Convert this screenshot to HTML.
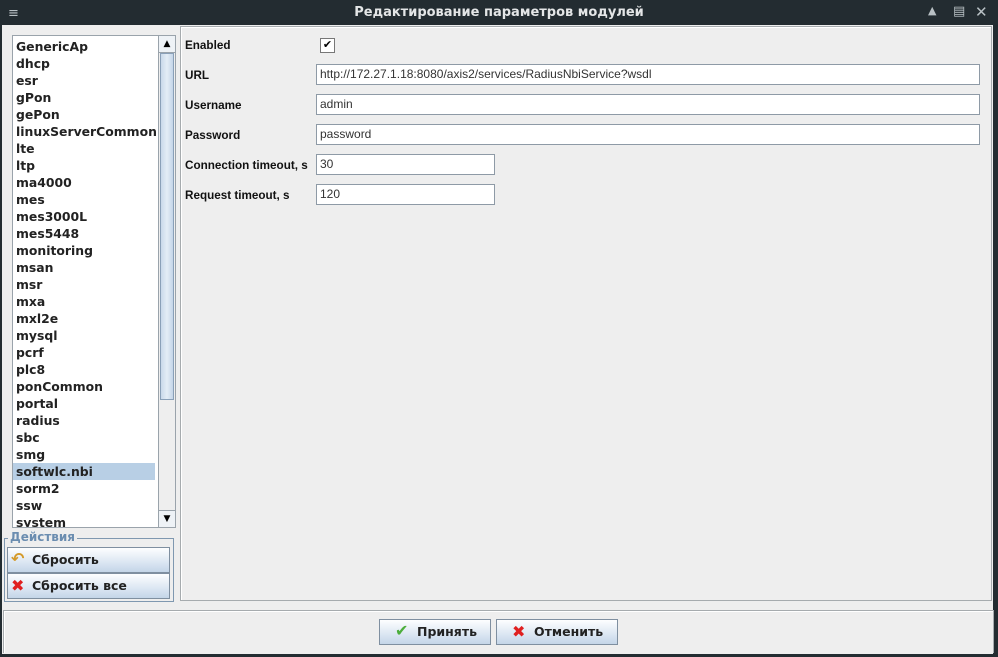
<!DOCTYPE html><html><head><style>
body{margin:0;width:998px;height:657px;background:#232c31;position:relative;overflow:hidden;font-family:"DejaVu Sans",sans-serif}
.a{position:absolute}
.title{left:0;top:0;width:998px;height:25px;color:#e4e6e7;font:bold 13px "DejaVu Sans",sans-serif;text-align:center;line-height:25px}
.win{left:2px;top:25px;width:991px;height:629px;background:#eeeeee}
.list{left:12px;top:35px;width:162px;height:492px;background:#fff;border:1px solid #9aa3ab;overflow:hidden;padding-top:2px;box-sizing:border-box;height:493px;width:164px}
.list div{height:17px;line-height:17px;padding-left:3px;font-size:12.4px;font-weight:bold;color:#222;white-space:nowrap}
.sel{background:#b8cfe5;width:139px}
.sb{left:158px;top:36px;width:16px;height:491px;background:#eee;border-left:1px solid #9aa3ab}
.lbl{left:185px;font:bold 11.7px "Liberation Sans",sans-serif;color:#111}
.tf{left:316px;background:#fff;border:1px solid #8e9aa6;font:12px "Liberation Sans",sans-serif;line-height:19px;padding-left:3px;color:#333;box-sizing:border-box;height:21px}
.btn{border:1px solid #7f8fa0;background:linear-gradient(#fdfeff,#dbe6f2 60%,#c4d5e8);font-size:12.5px;font-weight:bold;color:#222;box-sizing:border-box}
</style></head><body>
<div class="a title">Редактирование параметров модулей</div>
<div class="a" style="left:8px;top:6px;color:#b8c0c4;font-size:13px">≡</div>
<div class="a" style="left:928px;top:4px;color:#b8c0c4;font-size:11px">▲</div>
<div class="a" style="left:953px;top:4px;color:#b8c0c4;font-size:13px">▤</div>
<div class="a" style="left:975px;top:3px;color:#b8c0c4;font-size:15px;font-weight:bold">✕</div>
<div class="a win"></div>
<div class="a" style="left:180px;top:26px;width:812px;height:575px;box-sizing:border-box;border:1px solid #a6abae;box-shadow:inset 1px 1px 0 #fff"></div>
<div class="a list">
<div>GenericAp</div><div>dhcp</div><div>esr</div><div>gPon</div><div>gePon</div><div>linuxServerCommon</div><div>lte</div><div>ltp</div><div>ma4000</div><div>mes</div><div>mes3000L</div><div>mes5448</div><div>monitoring</div><div>msan</div><div>msr</div><div>mxa</div><div>mxl2e</div><div>mysql</div><div>pcrf</div><div>plc8</div><div>ponCommon</div><div>portal</div><div>radius</div><div>sbc</div><div>smg</div><div class="sel">softwlc.nbi</div><div>sorm2</div><div>ssw</div><div>system</div>
</div>
<div class="a sb"><div class="a" style="left:0;top:0;width:16px;height:16px;background:#eef2f6;border-bottom:1px solid #9aa3ab;font-size:9px;text-align:center;line-height:16px">▲</div><div class="a" style="left:1px;top:17px;width:14px;height:347px;background:linear-gradient(90deg,#c9d9ea,#e4edf6,#c4d5e8);border:1px solid #8aa0b8;box-sizing:border-box"></div><div class="a" style="left:0;bottom:0;width:16px;height:16px;background:#eef2f6;border-top:1px solid #9aa3ab;font-size:9px;text-align:center;line-height:16px">▼</div></div>
<div class="a" style="left:4px;top:538px;width:168px;height:62px;border:1px solid #7f98b0"></div>
<div class="a" style="left:8px;top:530px;background:#eee;color:#6b8db0;font-size:12px;font-weight:bold;padding:0 2px">Действия</div>
<div class="a btn" style="left:7px;top:547px;width:163px;height:26px;line-height:24px;padding-left:24px">Сбросить</div>
<div class="a" style="left:11px;top:549px;color:#d49a2a;font-size:16px;font-weight:bold">↶</div>
<div class="a btn" style="left:7px;top:573px;width:163px;height:26px;line-height:24px;padding-left:24px">Сбросить все</div>
<div class="a" style="left:11px;top:576px;color:#e02020;font-size:16px;font-weight:bold">✖</div>
<div class="a lbl" style="top:39px">Enabled</div>
<div class="a" style="left:320px;top:38px;width:13px;height:13px;border:1px solid #777;background:#fff;font-size:11px;line-height:12px;text-align:center">✔</div>
<div class="a lbl" style="top:69px">URL</div><div class="a tf" style="top:64px;width:664px">http://172.27.1.18:8080/axis2/services/RadiusNbiService?wsdl</div>
<div class="a lbl" style="top:99px">Username</div><div class="a tf" style="top:94px;width:664px">admin</div>
<div class="a lbl" style="top:129px">Password</div><div class="a tf" style="top:124px;width:664px">password</div>
<div class="a lbl" style="top:159px">Connection timeout, s</div><div class="a tf" style="top:154px;width:179px">30</div>
<div class="a lbl" style="top:189px">Request timeout, s</div><div class="a tf" style="top:184px;width:179px">120</div>
<div class="a" style="left:3px;top:610px;width:989px;height:42px;border:1px solid #a6abae;border-bottom:0;box-shadow:inset 1px 1px 0 #fff"></div>
<div class="a btn" style="left:379px;top:619px;width:112px;height:26px;line-height:24px;padding-left:37px">Принять</div>
<div class="a" style="left:395px;top:621px;color:#4cae3c;font-size:16px;font-weight:bold">✔</div>
<div class="a btn" style="left:496px;top:619px;width:122px;height:26px;line-height:24px;padding-left:37px">Отменить</div>
<div class="a" style="left:512px;top:622px;color:#e02020;font-size:16px;font-weight:bold">✖</div>
</body></html>
